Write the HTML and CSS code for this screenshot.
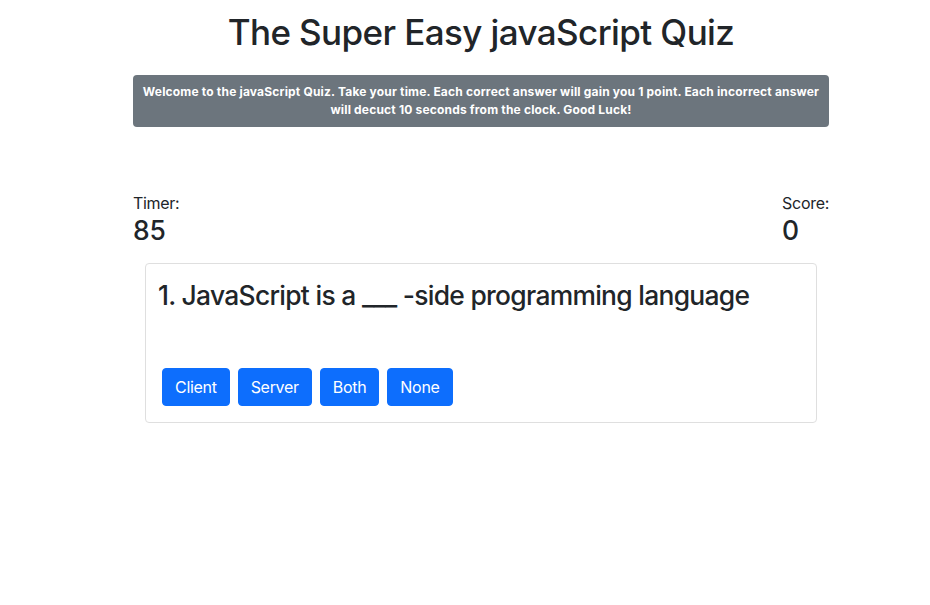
FILE: index.html
```html
<!DOCTYPE html>
<html lang="en">
<head>
<meta charset="utf-8">
<title>The Super Easy javaScript Quiz</title>
<link rel="stylesheet" href="styles.css">
</head>
<body>
<div class="container">
  <h1 class="title">The Super Easy javaScript Quiz</h1>
  <div class="intro">Welcome to the javaScript Quiz. Take your time. Each correct answer will gain you 1 point. Each incorrect answer will decuct 10 seconds from the clock. Good Luck!</div>
  <div class="stats">
    <div class="stat">
      <div class="stat-label">Timer:</div>
      <h3 class="stat-value">85</h3>
    </div>
    <div class="stat">
      <div class="stat-label">Score:</div>
      <h3 class="stat-value">0</h3>
    </div>
  </div>
  <div class="card">
    <h3 class="question">1. JavaScript is a ___ -side programming language</h3>
    <div class="answers">
      <button class="btn">Client</button>
      <button class="btn">Server</button>
      <button class="btn">Both</button>
      <button class="btn">None</button>
    </div>
  </div>
</div>
</body>
</html>
```
FILE: styles.css
```css
html, body {
  margin: 0;
  padding: 0;
  background: #fff;
}
body {
  font-family: Inter, "Liberation Sans", sans-serif;
  color: #212529;
  font-size: 16px;
  line-height: 1.5;
}
.container {
  width: 696px;
  margin-left: 133px;
}
.title {
  margin: 11px 0 22px;
  font-size: 35px;
  font-weight: 500;
  line-height: 42px;
  letter-spacing: -0.6px;
  text-align: center;
}
.intro {
  background: #6c757d;
  color: #fff;
  font-size: 12px;
  font-weight: 700;
  line-height: 18px;
  letter-spacing: 0.18px;
  text-align: center;
  padding: 8px 6px;
  border-radius: 4px;
}
.stats {
  display: flex;
  justify-content: space-between;
  margin-top: 64px;
}
.stat-label {
  font-size: 16px;
  line-height: 24px;
  letter-spacing: -0.3px;
}
.stat-value {
  margin: 0 0 16px;
  font-size: 26.4px;
  font-weight: 500;
  line-height: 1.2;
}
.card {
  margin: 0 12px;
  border: 1px solid #dfdfdf;
  border-radius: 4px;
  padding: 16px 12px;
}
.question {
  margin: 0;
  font-size: 26.4px;
  font-weight: 500;
  line-height: 1.2;
  letter-spacing: -0.7px;
}
.answers {
  display: flex;
  gap: 8px;
  margin-top: 57px;
  padding-left: 4px;
}
.btn {
  font-family: inherit;
  font-size: 16px;
  line-height: 24px;
  letter-spacing: -0.3px;
  padding: 6px 12px;
  color: #fff;
  background: #0d6efd;
  border: 1px solid #0d6efd;
  border-radius: 4px;
}
```
